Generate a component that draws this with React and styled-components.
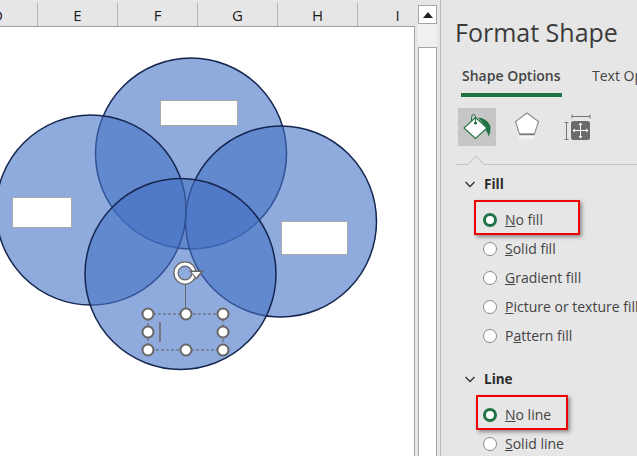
import React from 'react';
import styled, { createGlobalStyle } from 'styled-components';

const GlobalStyle = createGlobalStyle`
  html, body { margin: 0; padding: 0; background: #e6e6e6; }
  * { box-sizing: border-box; }
`;

const columns = ['D', 'E', 'F', 'G', 'H', 'I'];
const handles = [
  [148, 313], [186, 313], [223, 313],
  [148, 331], [223, 331],
  [148, 349], [186, 349], [223, 349],
];

const VennDrawing = () => (
  <Canvas viewBox="0 26 414 430" width="414" height="430">
    <g fill="#4472c4" fillOpacity="0.6" stroke="#14264f" strokeWidth="1.5">
      <circle cx="191" cy="152.5" r="95.5" />
      <circle cx="91" cy="209" r="95" />
      <circle cx="281" cy="220.5" r="95.5" />
      <circle cx="180.5" cy="273" r="95.5" />
    </g>
    <g fill="#fff" stroke="#a9a9a9" strokeWidth="1">
      <rect x="160.5" y="99.5" width="77" height="25" />
      <rect x="12.5" y="196.5" width="59" height="30" />
      <rect x="281.5" y="220.5" width="66" height="33" />
    </g>
    <path d="M148 313H223V349H148Z" fill="none" stroke="#5f5f5f" strokeWidth="1" strokeDasharray="3 2" />
    <path d="M185.500 282V313" stroke="#666" strokeWidth="1" />
    <path d="M160 321V341" stroke="#6d6b66" strokeWidth="1.600" />
    <g>
      <circle cx="185" cy="272" r="9" fill="none" stroke="#666" strokeWidth="5.500" />
      <circle cx="185" cy="272" r="9" fill="none" stroke="#fff" strokeWidth="3" />
      <path d="M189 269.500H204L196.500 278.500Z" fill="#666" />
      <path d="M191.500 271H200.500L196.300 276.500Z" fill="#fff" />
    </g>
    <g fill="#fff" stroke="#666" strokeWidth="2">
      {handles.map(([cx, cy]) => (
        <circle key={`${cx}-${cy}`} cx={cx} cy={cy} r="5.500" />
      ))}
    </g>
  </Canvas>
);

const FillIcon = () => (
  <svg width="38" height="38" viewBox="0 0 38 38">
    <path d="M17.500 9.500L29 20L17.500 30.500L6 20Z" fill="#fff" stroke="#217346" strokeWidth="1.100" />
    <path d="M13.500 13V9.500Q13.500 6.500 15.500 6.500Q17.500 6.500 17.500 9.500V15" fill="none" stroke="#217346" strokeWidth="1" />
    <circle cx="17.500" cy="15" r="1.600" fill="#217346" />
    <path d="M20 9.500Q29 10 32.500 18.500Q33 24 30.500 29Q30 24 27.500 22.500L29 20Z" fill="#217346" />
  </svg>
);

const EffectsIcon = () => (
  <svg width="24" height="38" viewBox="0 0 24 38">
    <defs>
      <linearGradient id="fade" x1="0" y1="0" x2="0" y2="1">
        <stop offset="0" stopColor="#fff" />
        <stop offset="1" stopColor="#e6e6e6" />
      </linearGradient>
    </defs>
    <path d="M12 5L23.500 13.500L19.500 26H4.500L0.500 13.500Z" fill="#fff" stroke="#8a8a8a" strokeWidth="1.100" />
    <path d="M5 26H19L21 33H3Z" fill="url(#fade)" />
    <path d="M4.500 26.500H19.500" stroke="#777" strokeWidth="1.500" />
  </svg>
);

const SizeIcon = () => (
  <svg width="28" height="38" viewBox="0 0 28 38">
    <path d="M9 8.500H27M9 6.500V10.500M27 6.500V10.500M1.500 14.500H5.500M1.500 31.500H5.500M3.500 14.500V31.500" fill="none" stroke="#777" strokeWidth="1" />
    <rect x="8" y="13" width="19" height="19" rx="2.500" fill="#6a6a6a" />
    <path d="M17.500 15.500V29.500M10.500 22.500H24.500" stroke="#fff" strokeWidth="1" />
    <path d="M17.500 14.500L15.500 17H19.500ZM17.500 30.500L15.500 28H19.500ZM9.500 22.500L12 20.500V24.500ZM25.500 22.500L23 20.500V24.500Z" fill="#fff" />
  </svg>
);

const Chevron = () => (
  <ChevronMark width="10" height="7" viewBox="0 0 10 7">
    <path d="M0.500 1L5 5.500L9.500 1" fill="none" stroke="#333" strokeWidth="1.300" />
  </ChevronMark>
);

const Option = ({ checked, box, label }) => (
  <OptionRow>
    <Radio $checked={checked} />
    <OptionLabel>{label}</OptionLabel>
    {box && <Callout $left={box.left} $top={box.top} $width={box.width} />}
  </OptionRow>
);

const App = () => (
  <Page>
    <GlobalStyle />
    <Sheet>
      <ColumnHeader>
        {columns.map((c) => (
          <ColumnCell key={c}>{c}</ColumnCell>
        ))}
      </ColumnHeader>
      <Grid>
        <VennDrawing />
      </Grid>
    </Sheet>
    <Scrollbar>
      <ScrollButton>
        <svg width="10" height="6" viewBox="0 0 10 6"><path d="M5 0L10 6H0Z" fill="#222" /></svg>
      </ScrollButton>
      <ScrollThumb />
    </Scrollbar>
    <Panel>
      <Title>Format Shape</Title>
      <Tabs>
        <Tab $active>Shape Options</Tab>
        <Tab>Text Options</Tab>
      </Tabs>
      <IconRow>
        <IconButton $active><FillIcon /></IconButton>
        <IconButton><EffectsIcon /></IconButton>
        <IconButton><SizeIcon /></IconButton>
      </IconRow>
      <Divider />
      <SectionHeading $first><Chevron />Fill</SectionHeading>
      <Options>
        <Option checked box={{ left: 33, top: -5, width: 106 }} label={<><u>N</u>o fill</>} />
        <Option label={<><u>S</u>olid fill</>} />
        <Option label={<><u>G</u>radient fill</>} />
        <Option label={<><u>P</u>icture or texture fill</>} />
        <Option label={<>P<u>a</u>ttern fill</>} />
      </Options>
      <SectionHeading $gap={17}><Chevron />Line</SectionHeading>
      <Options>
        <Option checked box={{ left: 35, top: -5, width: 92 }} label={<><u>N</u>o line</>} />
        <Option label={<><u>S</u>olid line</>} />
      </Options>
    </Panel>
  </Page>
);

const Page = styled.div`
  display: flex;
  width: 637px;
  height: 456px;
  overflow: hidden;
  background: #e6e6e6;
  font-family: 'Open Sans', 'Noto Sans', sans-serif;
`;

const Sheet = styled.div`
  display: flex;
  flex-direction: column;
  flex: none;
  width: 415px;
  overflow: hidden;
`;

const ColumnHeader = styled.div`
  display: flex;
  flex: none;
  height: 27px;
  margin-left: -42px;
  padding-top: 3px;
  border-bottom: 1px solid #9e9e9e;
`;

const ColumnCell = styled.div`
  flex: none;
  width: 80px;
  height: 23px;
  text-align: center;
  font-size: 15px;
  line-height: 24px;
  color: #1a1a1a;
  border-right: 1px solid #b4b4b4;
`;

const Grid = styled.div`
  flex: 1;
  background: #fff;
  border-right: 1px solid #a6a6a6;
  min-height: 0;
`;

const Canvas = styled.svg`
  display: block;
`;

const Scrollbar = styled.div`
  display: flex;
  flex-direction: column;
  flex: none;
  width: 19px;
  height: 451px;
  margin: 5px 0 0 3px;
  background: #f0f0f0;
`;

const ScrollButton = styled.div`
  display: flex;
  align-items: center;
  justify-content: center;
  flex: none;
  height: 19px;
  background: #fff;
  border: 1px solid #a6a6a6;
`;

const ScrollThumb = styled.div`
  flex: 1;
  margin-top: 23px;
  background: #fff;
  border: 1px solid #a6a6a6;
  border-bottom: 0;
`;

const Panel = styled.div`
  flex: none;
  width: 197px;
  height: 456px;
  margin-left: 3px;
  overflow: hidden;
  border-left: 1px solid #b9b9b9;
  white-space: nowrap;
`;

const Title = styled.div`
  height: 60px;
  padding: 14px 0 0 14px;
  font-size: 25px;
  line-height: 36px;
  color: #3b3b3b;
`;

const Tabs = styled.div`
  display: flex;
  gap: 29px;
  height: 37px;
  margin-left: 20px;
`;

const Tab = styled.div`
  flex: none;
  width: ${(p) => (p.$active ? '101px' : 'auto')};
  height: 37px;
  padding-left: 1px;
  font-size: 14px;
  font-weight: ${(p) => (p.$active ? 600 : 400)};
  line-height: 32px;
  color: #444;
  border-bottom: ${(p) => (p.$active ? '4px solid #217346' : '0')};
`;

const IconRow = styled.div`
  display: flex;
  gap: 12px;
  height: 38px;
  margin: 11px 0 0 17px;
`;

const IconButton = styled.div`
  display: flex;
  align-items: center;
  justify-content: center;
  flex: none;
  width: 38px;
  height: 38px;
  background: ${(p) => (p.$active ? '#c6c6c6' : 'transparent')};
`;

const Divider = styled.div`
  position: relative;
  height: 1px;
  margin: 18px 0 0 14px;
  background: #c8c8c8;

  &::before {
    content: '';
    position: absolute;
    left: 15px;
    top: -6px;
    width: 11px;
    height: 11px;
    background: #e6e6e6;
    border-top: 1px solid #c8c8c8;
    border-left: 1px solid #c8c8c8;
    transform: rotate(45deg);
  }
`;

const SectionHeading = styled.div`
  display: flex;
  align-items: center;
  height: 24px;
  margin: ${(p) => (p.$first ? '7px' : `${p.$gap}px`)} 0 9px 24px;
  font-size: 13.500px;
  font-weight: 700;
  color: #2b2b2b;
`;

const ChevronMark = styled.svg`
  flex: none;
  margin-right: 9px;
`;

const Options = styled.div`
  display: flex;
  flex-direction: column;
`;

const OptionRow = styled.div`
  position: relative;
  display: flex;
  align-items: center;
  height: 29px;
  padding-left: 42px;
`;

const Radio = styled.span`
  flex: none;
  width: 14px;
  height: 14px;
  border-radius: 50%;
  background: #fff;
  border: ${(p) => (p.$checked ? '3px solid #217346' : '1px solid #8a8a8a')};
`;

const OptionLabel = styled.span`
  margin-left: 8px;
  font-size: 14px;
  color: #444;
`;

const Callout = styled.span`
  position: absolute;
  left: ${(p) => p.$left}px;
  top: ${(p) => p.$top}px;
  width: ${(p) => p.$width}px;
  height: 35px;
  border: 2px solid #f00000;
  box-shadow: 2px 2px 4px rgba(0, 0, 0, 0.4);
`;

export default App;
